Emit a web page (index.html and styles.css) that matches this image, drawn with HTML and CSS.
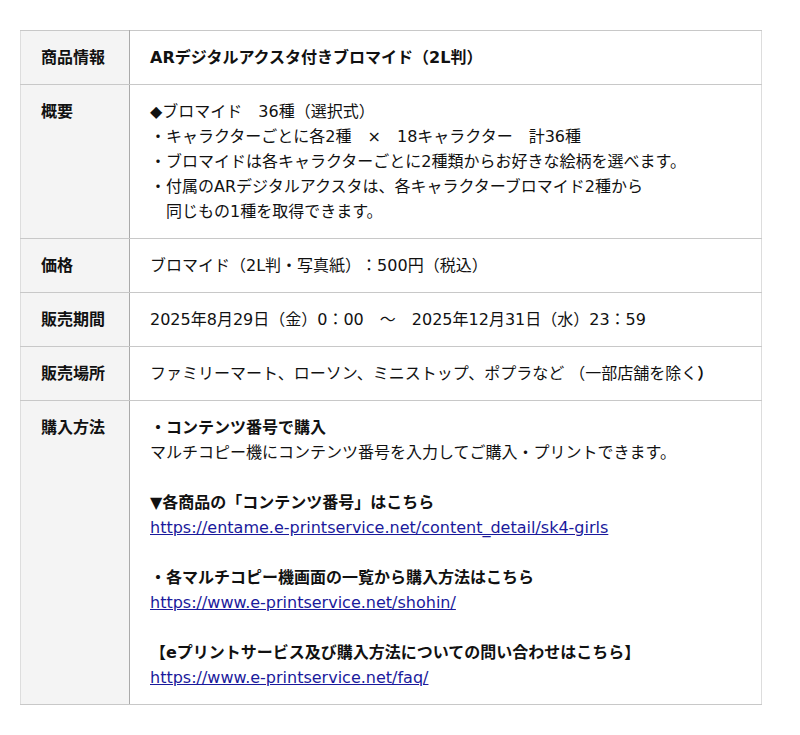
FILE: index.html
```html
<!DOCTYPE html>
<html lang="ja">
<head>
<meta charset="utf-8">
<link rel="stylesheet" href="styles.css">
</head>
<body>
<div class="wrap">
<table class="spec">
<tr><th>商品情報</th><td class="strong">ARデジタルアクスタ付きブロマイド（2L判）</td></tr>
<tr><th>概要</th><td>◆ブロマイド　36種（選択式）<br>・キャラクターごとに各2種　×　18キャラクター　計36種<br>・ブロマイドは各キャラクターごとに2種類からお好きな絵柄を選べます。<br>・付属のARデジタルアクスタは、各キャラクターブロマイド2種から<br>　同じもの1種を取得できます。</td></tr>
<tr><th>価格</th><td>ブロマイド（2L判・写真紙）：500円（税込）</td></tr>
<tr><th>販売期間</th><td>2025年8月29日（金）0：00　～　2025年12月31日（水）23：59</td></tr>
<tr><th>販売場所</th><td>ファミリーマート、ローソン、ミニストップ、ポプラなど （一部店舗を除く<b>）</b></td></tr>
<tr><th>購入方法</th><td><b>・コンテンツ番号で購入</b><br>マルチコピー機にコンテンツ番号を入力してご購入・プリントできます。<br><br><b>▼各商品の「コンテンツ番号」はこちら</b><br><a href="#">https://entame.e-printservice.net/content_detail/sk4-girls</a><br><br><b>・各マルチコピー機画面の一覧から購入方法はこちら</b><br><a href="#">https://www.e-printservice.net/shohin/</a><br><br><b>【eプリントサービス及び購入方法についての問い合わせはこちら】</b><br><a href="#">https://www.e-printservice.net/faq/</a></td></tr>
</table>
</div>
</body>
</html>
```

FILE: styles.css
```css
html, body { margin: 0; padding: 0; background: #fff; }
body {
  font-family: "DejaVu Sans", "Noto Sans CJK JP", sans-serif;
  font-size: 16px;
  color: #111;
  text-spacing-trim: space-all;
}
.wrap { padding: 30px 20px; }
.spec {
  width: 742px;
  border-collapse: collapse;
  border: 1px solid #ddd;
}
.spec th, .spec td {
  border-top: 1px solid #c8c8c8;
  border-bottom: 1px solid #c8c8c8;
  padding: 14px 20px;
  line-height: 25px;
  text-align: left;
  vertical-align: top;
}
.spec th {
  width: 68px;
  background: #f4f4f4;
  font-weight: bold;
  border-right: 1px solid #aaa;
  white-space: nowrap;
}
.spec td { font-weight: normal; }
.spec td.strong { font-weight: bold; }
.spec a { color: #1a1a9c; }
```
